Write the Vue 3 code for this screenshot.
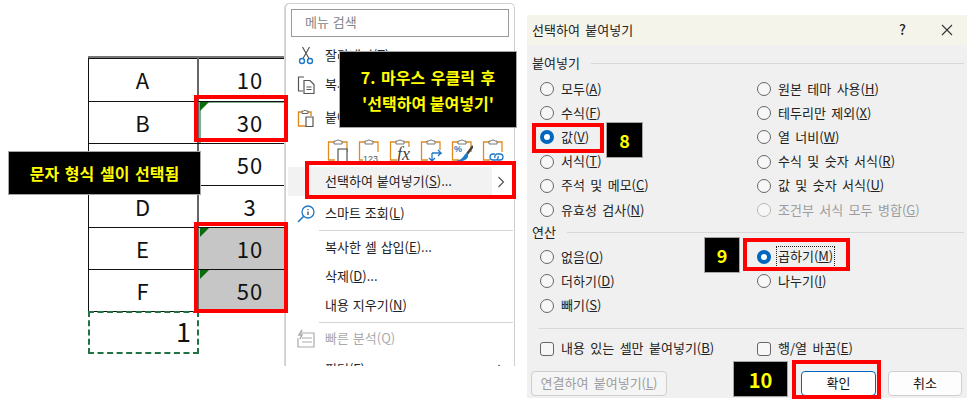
<script setup>
const rows = [
  { name: 'A', value: '10' },
  { name: 'B', value: '30', mark: true, selected: true },
  { name: 'C', value: '50' },
  { name: 'D', value: '3' },
  { name: 'E', value: '10', mark: true, gray: true },
  { name: 'F', value: '50', mark: true, gray: true },
]
const pasteLeft = [
  ['모두', 'A'], ['수식', 'F'], ['값', 'V', 'on'], ['서식', 'T'], ['주석 및 메모', 'C'], ['유효성 검사', 'N'],
]
const pasteRight = [
  ['원본 테마 사용', 'H'], ['테두리만 제외', 'X'], ['열 너비', 'W'], ['수식 및 숫자 서식', 'R'], ['값 및 숫자 서식', 'U'], ['조건부 서식 모두 병합', 'G', 'off'],
]
const opLeft = [['없음', 'O'], ['더하기', 'D'], ['빼기', 'S']]
const opRight = [['곱하기', 'M', 'on', 'focus'], ['나누기', 'I']]
const pasteIcons = ['doc', '123', 'fx', 'swap', 'brush', 'link']
</script>

<template>
  <div class="page">
    <section class="sheet">
      <div v-for="r in rows" :key="r.name" class="row">
        <div class="cell name">{{ r.name }}</div>
        <div class="cell val" :class="{ gray: r.gray, sel: r.selected }">
          <i v-if="r.mark" class="tri"></i>{{ r.value }}
        </div>
      </div>
      <div class="copied">1</div>
    </section>

    <section class="menu">
      <div class="search">메뉴 검색</div>
      <div class="item">
        <svg class="ico" viewBox="0 0 20 20" fill="none"><path d="M6.500 1l6.500 11.500M13.500 1L7 12.500" stroke="#555" stroke-width="1.200"/><circle cx="6" cy="15" r="2.500" stroke="#1f78c8" stroke-width="1.400"/><circle cx="14" cy="15" r="2.500" stroke="#1f78c8" stroke-width="1.400"/></svg>
        <span>잘라내기(T)</span>
      </div>
      <div class="item">
        <svg class="ico" viewBox="0 0 20 20" fill="none" stroke="#555" stroke-width="1.200"><path d="M8 2H2.500v14H7"/><path d="M8 5.500h6l4 4v9H8z" fill="#fff"/><path d="M10.500 12h5M10.500 14.500h5"/></svg>
        <span>복사(C)</span>
      </div>
      <div class="item paste">
        <svg class="ico" viewBox="0 0 20 20" fill="none"><path d="M6 4H2.500v14H10" stroke="#e08a1e" stroke-width="1.400"/><path d="M12 4h3v4" stroke="#e08a1e" stroke-width="1.400"/><path d="M6 5.500V3h1.500a2 2 0 0 1 3 0H12v2.500z" fill="#fff" stroke="#666"/><path d="M10 9h7v9.500h-7z" fill="#fff" stroke="#555" stroke-width="1.200"/></svg>
        <span>붙여넣기 옵션:</span>
      </div>
      <div class="paste-icons">
        <svg v-for="p in pasteIcons" :key="p" class="pi" viewBox="0 0 22 24" fill="none">
          <path d="M7 4H1.500v18H8M15 4h5v10" stroke="#e08a1e" stroke-width="1.300"/>
          <path d="M7 6V3h2a2.500 2.500 0 0 1 4 0h2v3z" fill="#fff" stroke="#777"/>
          <template v-if="p === 'doc'"><path d="M11 11h9v13h-9z" fill="#fff" stroke="#444" stroke-width="1.100"/></template>
          <template v-else-if="p === '123'"><rect x="5" y="14" width="17" height="10" fill="#fff"/><text x="5" y="23.500" class="t123">123</text></template>
          <template v-else-if="p === 'fx'"><rect x="8" y="9" width="14" height="15" fill="#fff"/><text x="8" y="22" class="tfx">fx</text></template>
          <template v-else-if="p === 'swap'"><rect x="9" y="12" width="13" height="12" fill="#fff"/><path d="M12 15h9l-3-3M21 15l-3 3M12 15v8M12 23l-3-3M12 23l3-3" stroke="#1f78c8" stroke-width="1.300"/></template>
          <template v-else-if="p === 'brush'"><path d="M16 16L22 8" stroke="#444" stroke-width="2.500"/><path d="M17 15c-3 0-3 2-5 4-1 2-4 3-7 4 5 1 10 0 12-4z" fill="#1f78c8"/><text x="3" y="14" class="tpct">%</text></template>
          <template v-else><rect x="8" y="14" width="14" height="10" fill="#fff"/><path d="M13 16h-2a3 3 0 0 0 0 6h3a3 3 0 0 0 2-4M15 22h3a3 3 0 0 0 0-6h-3a3 3 0 0 0-2 4" stroke="#1f78c8" stroke-width="1.300"/></template>
        </svg>
      </div>
      <div class="item special">
        <span>선택하여 붙여넣기(<u>S</u>)...</span>
        <svg class="chev" viewBox="0 0 8 12" fill="none"><path d="M1.500 1l5 5-5 5" stroke="#555" stroke-width="1.200"/></svg>
      </div>
      <div class="item smart">
        <svg class="ico" viewBox="0 0 20 20" fill="none"><circle cx="12" cy="8" r="6" stroke="#1f78c8" stroke-width="1.300"/><path d="M7.500 12.500L2 18" stroke="#1f78c8" stroke-width="1.600"/><path d="M12 7.500V11M12 5v1" stroke="#444" stroke-width="1.300"/></svg>
        <span>스마트 조회(<u>L</u>)</span>
      </div>
      <hr class="sep" />
      <div class="item"><span>복사한 셀 삽입(<u>E</u>)...</span></div>
      <div class="item"><span>삭제(<u>D</u>)...</span></div>
      <div class="item"><span>내용 지우기(<u>N</u>)</span></div>
      <hr class="sep" />
      <div class="item disabled">
        <svg class="ico" viewBox="0 0 20 20" fill="none" stroke="#aaa" stroke-width="1.200"><path d="M5 4h13v14H2V9"/><path d="M6 9h10M6 13h10"/><path d="M6 1L3 6h3l-2 4" stroke-width="1.500"/></svg>
        <span>빠른 분석(Q)</span>
      </div>
      <div class="item filter">
        <span>필터(F)</span>
        <svg class="chev" viewBox="0 0 8 12" fill="none"><path d="M1.500 1l5 5-5 5" stroke="#555" stroke-width="1.200"/></svg>
      </div>
    </section>

    <section class="dialog">
      <header class="title">
        <span>선택하여 붙여넣기</span>
        <b class="help">?</b>
        <svg class="close" viewBox="0 0 12 12" fill="none"><path d="M1 1l10 10M11 1L1 11" stroke="#333" stroke-width="1.100"/></svg>
      </header>
      <div class="body">
        <div class="head"><span>붙여넣기</span><i></i></div>
        <div class="opts">
          <div class="col">
            <label v-for="o in pasteLeft" :key="o[1]" class="opt">
              <i class="radio" :class="o[2]"></i><span>{{ o[0] }}(<u>{{ o[1] }}</u>)</span>
            </label>
          </div>
          <div class="col">
            <label v-for="o in pasteRight" :key="o[1]" class="opt" :class="o[2]">
              <i class="radio" :class="o[2]"></i><span>{{ o[0] }}(<u>{{ o[1] }}</u>)</span>
            </label>
          </div>
        </div>
        <div class="head"><span>연산</span><i></i></div>
        <div class="opts ops">
          <div class="col">
            <label v-for="o in opLeft" :key="o[1]" class="opt">
              <i class="radio"></i><span>{{ o[0] }}(<u>{{ o[1] }}</u>)</span>
            </label>
          </div>
          <div class="col">
            <label v-for="o in opRight" :key="o[1]" class="opt">
              <i class="radio" :class="o[2]"></i><span :class="o[3]">{{ o[0] }}(<u>{{ o[1] }}</u>)</span>
            </label>
          </div>
        </div>
        <hr class="rule" />
        <div class="opts checks">
          <label class="opt"><i class="check"></i><span>내용 있는 셀만 붙여넣기(<u>B</u>)</span></label>
          <label class="opt"><i class="check"></i><span>행/열 바꿈(<u>E</u>)</span></label>
        </div>
        <div class="buttons">
          <button class="btn link">연결하여 붙여넣기(<u>L</u>)</button>
          <button class="btn ok">확인</button>
          <button class="btn cancel">취소</button>
        </div>
      </div>
    </section>

    <div class="note n-left">문자 형식 셀이 선택됨</div>
    <div class="note n-menu"><span class="l1">7. 마우스 우클릭 후</span><span>'선택하여 붙여넣기'</span></div>
    <div class="note n8">8</div>
    <div class="note n9">9</div>
    <div class="note n10">10</div>

    <i class="red r-b"></i>
    <i class="red r-ef"></i>
    <i class="red r-menu"></i>
    <i class="red r-val"></i>
    <i class="red r-mul"></i>
    <i class="red r-ok"></i>
  </div>
</template>

<style scoped>
.page {
  position: relative;
  display: flex;
  align-items: flex-start;
  width: 972px;
  height: 403px;
  overflow: hidden;
  background: #fff;
  color: #222;
  font-family: "Noto Sans CJK KR", "Noto Sans", sans-serif;
}

/* sheet */
.sheet {
  width: 197px;
  margin: 56px 0 0 88px;
  border-top: 2px solid #777;
  flex: none;
}
.row {
  display: flex;
  height: 42px;
  border-bottom: 1px solid #111;
  box-sizing: border-box;
}
.row:first-child {
  height: 44px;
  box-shadow: inset 0 1px 0 #111;
}
.cell {
  display: flex;
  align-items: center;
  justify-content: center;
  padding-bottom: 2px;
  font-size: 22px;
  letter-spacing: 1px;
  color: #111;
  box-sizing: border-box;
  position: relative;
}
.name {
  width: 111px;
  border-left: 1px solid #111;
  border-right: 2px solid #666;
}
.val {
  width: 86px;
  padding-left: 16px;
}
.val.gray { background: #c6c6c6; }
.val.sel { box-shadow: inset 2px 1px 0 #7fae93; }
.tri {
  position: absolute;
  left: 1px;
  top: 0;
  width: 0;
  height: 0;
  border-top: 9px solid #0b6a0b;
  border-right: 9px solid transparent;
}
.copied {
  width: 111px;
  height: 43px;
  margin-top: -1px;
  box-sizing: border-box;
  border: 2px dashed #217346;
  font-size: 27px;
  color: #111;
  text-align: right;
  padding-right: 6px;
  line-height: 36px;
}

/* context menu */
.menu {
  flex: none;
  width: 230px;
  height: 363px;
  margin-top: 3px;
  overflow: hidden;
  box-sizing: border-box;
  background: #fff;
  border: 1px solid #cfcfcf;
  border-bottom: none;
  border-radius: 5px 5px 0 0;
  box-shadow: -1px 0 0 #d8d8d8;
  font-size: 13px;
  word-spacing: 1px;
  position: relative;
  z-index: 1;
}
.search {
  height: 28px;
  margin: 5px 5px 4px;
  padding-left: 13px;
  box-sizing: border-box;
  border: 1.500px solid #9a9a9a;
  color: #858585;
  line-height: 23px;
}
.item {
  position: relative;
  display: flex;
  align-items: center;
  height: 29px;
  padding-left: 39px;
  padding-bottom: 2px;
  box-sizing: border-box;
  flex: none;
}
.ico {
  position: absolute;
  left: 10px;
  top: 5px;
  width: 20px;
  height: 20px;
}
.paste { margin-top: 4px; }
.paste-icons {
  display: flex;
  gap: 9px;
  height: 30px;
  margin-top: 5px;
  padding: 1px 0 0 41px;
  box-sizing: border-box;
}
.pi { width: 22px; height: 24px; flex: none; }
.t123 { font: 9px "Liberation Sans", sans-serif; fill: #555; }
.tfx { font: italic 18px "Liberation Serif", serif; fill: #444; }
.tpct { font: bold 9px "Liberation Sans", sans-serif; fill: #1f78c8; }
.special {
  background: linear-gradient(to right, #f2f2f2 204px, #fff 204px);
  margin-left: 2px;
  padding-left: 37px;
}
.chev {
  position: absolute;
  right: 9px;
  top: 9px;
  width: 8px;
  height: 12px;
}
.smart { margin-top: 3px; }
.sep {
  margin: 2px 1px 1.500px 33px;
  border: none;
  height: 1px;
  background: #d4d4d4;
}
.disabled { color: #aaa; }
.filter { margin-top: 2px; }
.filter .chev { right: 9px; }

/* dialog */
.dialog {
  flex: none;
  width: 440px;
  height: 383px;
  margin: 15px 0 0 12px;
  background: #f0f0f0;
  font-size: 13px;
  word-spacing: 2.500px;
  color: #222;
}
.title {
  display: flex;
  align-items: center;
  height: 30px;
  padding: 0 14px 2px 5px;
  box-sizing: border-box;
  background: #f5f4ea;
}
.help { margin-left: auto; margin-right: 35px; font-size: 14px; font-weight: 500; }
.close { width: 12px; height: 12px; margin-top: 2px; }
.body { padding: 8px 3px 0 5px; }
.head {
  display: flex;
  align-items: center;
  gap: 11px;
  height: 20px;
}
.head span { padding-bottom: 2px; }
.head i { flex: 1; height: 1px; background: #d8d8d8; }
.opts {
  display: flex;
  margin-top: 4px;
  padding-left: 8px;
}
.col { width: 217px; flex: none; }
.opt {
  display: flex;
  align-items: center;
  gap: 7px;
  height: 24.200px;
}
.opt span { padding-bottom: 2px; }
.opt.off { color: #9c9c9c; }
.radio {
  box-sizing: border-box;
  width: 14px;
  height: 14px;
  flex: none;
  border: 1.200px solid #666;
  border-radius: 50%;
  background: #f7f7f7;
}
.radio.on {
  border: 4.200px solid #0067c0;
  background: #fff;
}
.radio.off { border-color: #b8b8b8; }
.opt .focus {
  outline: 1px dotted #222;
  padding: 0 1px 2px;
  margin-left: -1px;
  line-height: 18px;
}
.ops { margin-top: 3px; }
.rule {
  margin: 10px 0 0 7px;
  border: none;
  height: 1px;
  background: #d8d8d8;
}
.checks { margin-top: 8px; }
.checks .opt { width: 217px; flex: none; }
.check {
  box-sizing: border-box;
  width: 14px;
  height: 14px;
  flex: none;
  border: 1.200px solid #666;
  border-radius: 3px;
  background: #f7f7f7;
}
.buttons {
  display: flex;
  margin-top: 10px;
}
.btn {
  height: 25px;
  box-sizing: border-box;
  border: 1px solid #cfcfcf;
  border-radius: 4px;
  background: #fdfdfd;
  font: inherit;
  word-spacing: inherit;
  color: #111;
  padding: 0 0 2px;
}
.link {
  width: 136px;
  margin-left: -1px;
  color: #9c9c9c;
  background: #f5f5f5;
}
.ok {
  width: 75px;
  margin-left: 134px;
  border: 1.500px solid #0067c0;
  background: #fff;
}
.cancel { width: 74px; margin-left: 12px; }

/* annotations */
.note {
  position: absolute;
  z-index: 3;
  display: flex;
  flex-direction: column;
  align-items: center;
  justify-content: center;
  box-sizing: border-box;
  background: #000;
  border: 1px solid #a6a6a6;
  color: #ff0;
  font-weight: 700;
  font-size: 16px;
}
.n-left { left: 8px; top: 151px; width: 193px; height: 44px; word-spacing: 2px; }
.n-menu { left: 339px; top: 51px; width: 178px; height: 77px; gap: 6px; line-height: 20px; }
.l1 { font-size: 16px; word-spacing: 2px; }
.n8 { left: 606px; top: 122px; width: 37px; height: 36px; font-size: 18px; }
.n9 { left: 704px; top: 237px; width: 36px; height: 36px; font-size: 18px; }
.n10 { left: 733px; top: 361px; width: 55px; height: 36px; font-size: 20px; }
.red {
  position: absolute;
  z-index: 2;
  box-sizing: border-box;
  border: 4px solid #f00;
}
.r-b { left: 194px; top: 95px; width: 94px; height: 47px; }
.r-ef { left: 194px; top: 222px; width: 94px; height: 91px; }
.r-menu { left: 305px; top: 161px; width: 211px; height: 38px; }
.r-val { left: 532px; top: 123px; width: 72px; height: 30px; }
.r-mul { left: 743px; top: 238px; width: 107px; height: 33px; }
.r-ok { left: 792px; top: 360px; width: 89px; height: 39px; }
</style>
